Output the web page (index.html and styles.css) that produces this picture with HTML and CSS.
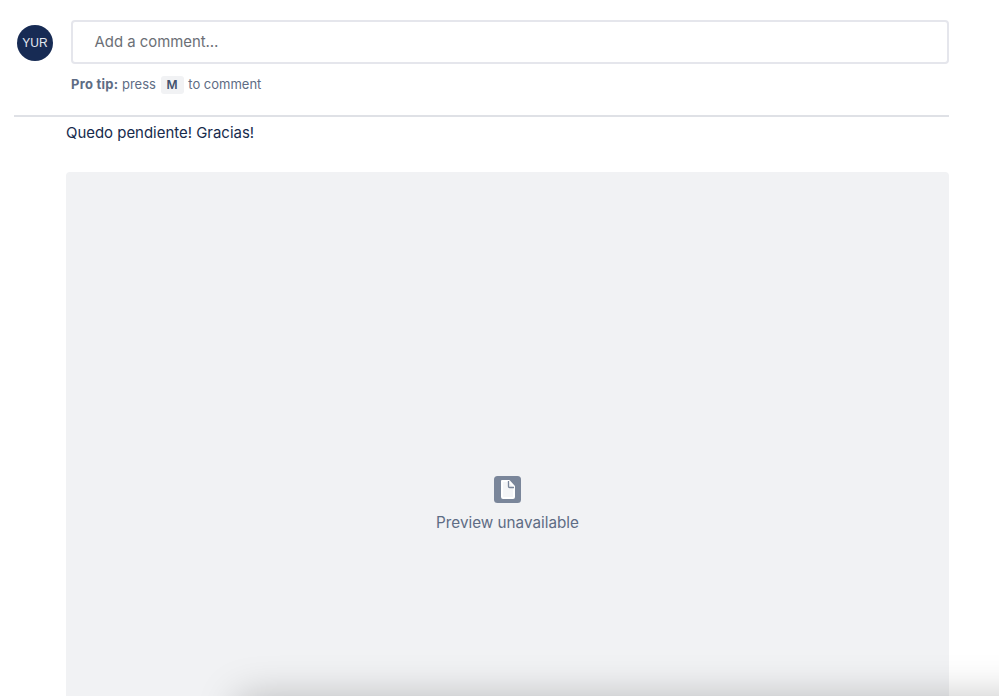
FILE: index.html
```html
<!DOCTYPE html>
<html lang="en">
<head>
<meta charset="utf-8">
<title>Comment</title>
<link rel="stylesheet" href="styles.css">
</head>
<body>
<main class="page">
  <section class="composer">
    <div class="avatar">YUR</div>
    <div class="composer-main">
      <div class="comment-input">Add a comment…</div>
      <p class="tip"><strong>Pro tip:</strong> press <kbd class="key">M</kbd> to comment</p>
    </div>
  </section>
  <hr class="divider">
  <article class="comment">
    <p class="comment-text">Quedo pendiente! Gracias!</p>
    <div class="preview">
      <svg class="file-icon" width="27" height="27" viewBox="0 0 27 27" aria-hidden="true">
        <rect width="27" height="27" rx="3.500" fill="#7a869a"/>
        <path d="M8 5h7l5 5.500V21a1 1 0 0 1-1 1H9a1 1 0 0 1-1-1z" fill="#f4f5f7" stroke="#fff" stroke-width="2" stroke-linejoin="round"/>
        <path d="M14.500 5v5.500a1 1 0 0 0 1 1h4.500" fill="none" stroke="#7a869a" stroke-width="1.300"/>
      </svg>
      <span class="preview-label">Preview unavailable</span>
    </div>
  </article>
</main>
<div class="bottom-sheet"></div>
</body>
</html>
```
FILE: styles.css
```css
html, body {
  margin: 0;
  height: 696px;
  overflow: hidden;
  background: #fff;
}
body {
  font-family: Inter, "Liberation Sans", sans-serif;
  color: #172b4d;
}
.page {
  width: 935px;
  margin-left: 14px;
  padding-top: 20px;
}
.composer {
  display: flex;
  align-items: flex-start;
  padding-left: 3px;
}
.avatar {
  flex: none;
  width: 36px;
  height: 36px;
  margin-top: 5px;
  margin-right: 18px;
  border-radius: 50%;
  background: #172b54;
  color: #e4e8f0;
  font-family: "Liberation Sans", sans-serif;
  font-size: 12px;
  line-height: 36px;
  text-align: center;
}
.composer-main {
  flex: 1;
  min-width: 0;
}
.comment-input {
  box-sizing: border-box;
  height: 44px;
  padding-left: 21.500px;
  border: 2px solid #e5e6ec;
  border-radius: 4px;
  color: #6b6f76;
  font-size: 14.900px;
  line-height: 40px;
}
.tip {
  margin: 11px 0 0;
  color: #5e6c84;
  font-size: 13px;
  line-height: 18px;
}
.tip strong {
  font-weight: 700;
  letter-spacing: 0.250px;
}
.key {
  display: inline-block;
  padding: 0 6px;
  margin: 0 1px;
  border-radius: 3px;
  background: #f1f2f4;
  color: #42526e;
  font-family: inherit;
  font-size: 12px;
  font-weight: 600;
  line-height: 18px;
}
.divider {
  height: 2px;
  margin: 21px 0 0;
  border: 0;
  background: #dfe1e6;
}
.comment {
  padding-left: 52px;
}
.comment-text {
  margin: 6px 0 0;
  font-size: 14.950px;
  line-height: 20px;
}
.preview {
  display: flex;
  flex-direction: column;
  align-items: center;
  height: 560px;
  margin-top: 29px;
  padding-top: 304px;
  box-sizing: border-box;
  border-radius: 4px;
  background: #f1f2f4;
}
.preview-label {
  margin-top: 10px;
  color: #5e6c84;
  font-size: 15.250px;
  line-height: 20px;
}
.bottom-sheet {
  position: absolute;
  left: 245px;
  right: -100px;
  top: 704px;
  height: 100px;
  box-shadow: 0 0 40px 6px rgba(0, 0, 0, 0.25);
  background: #fff;
}
```
